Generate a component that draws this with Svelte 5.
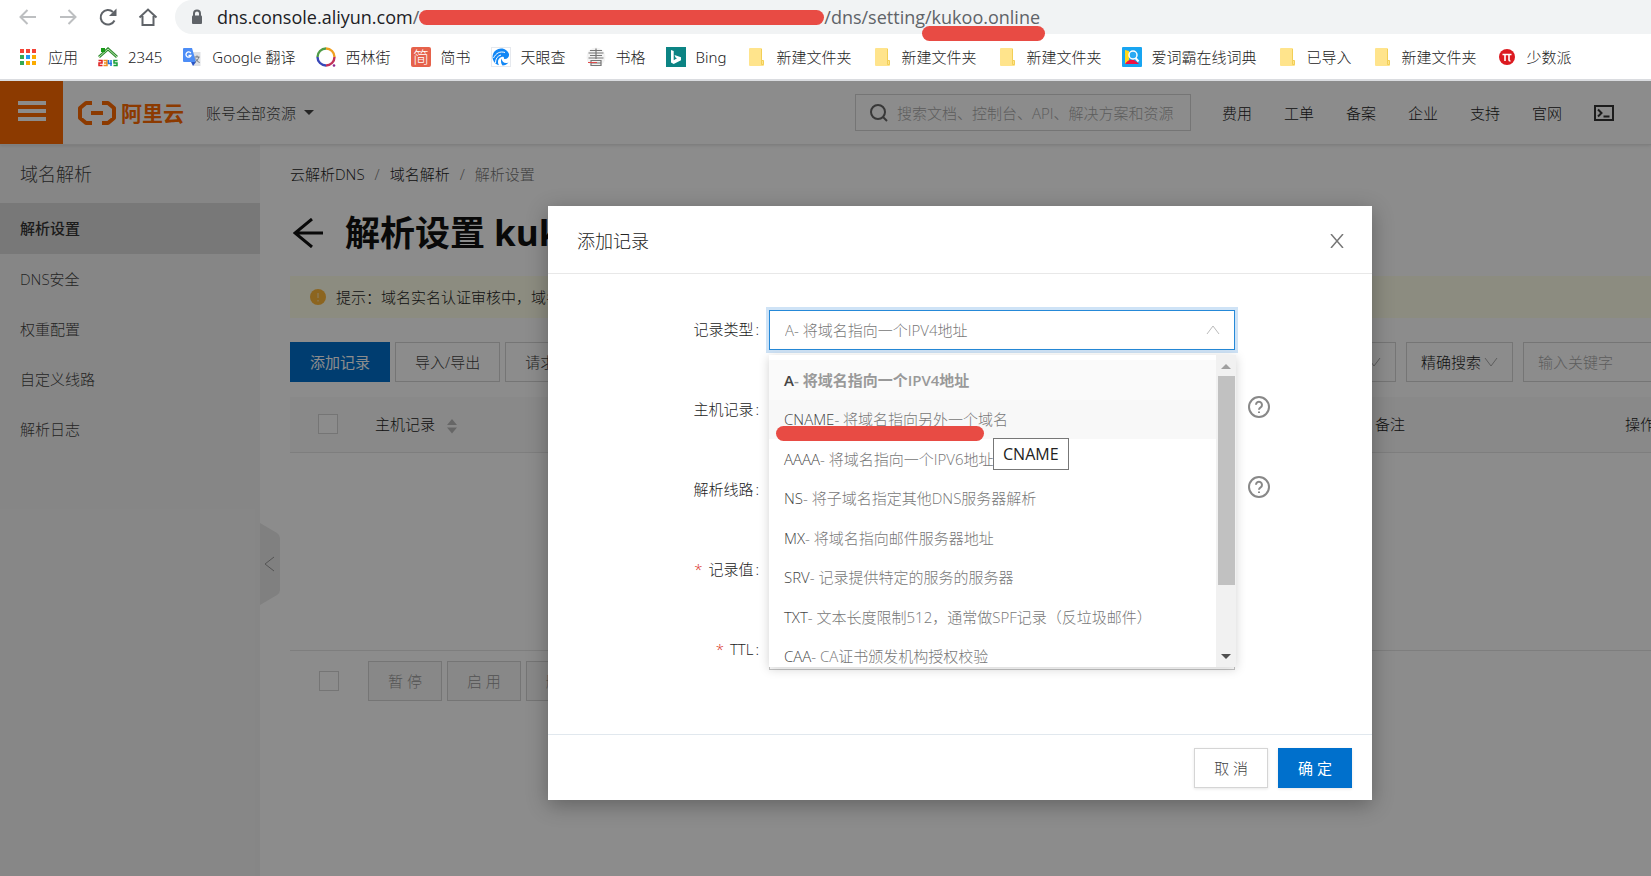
<script>
  const bookmarks = [
    { icon: "apps", label: "应用" },
    { icon: "house", label: "2345" },
    { icon: "translate", label: "Google 翻译" },
    { icon: "ring", label: "西林街" },
    { icon: "jian", label: "简书" },
    { icon: "eye", label: "天眼查" },
    { icon: "shu", label: "书格" },
    { icon: "bing", label: "Bing" },
    { icon: "folder", label: "新建文件夹" },
    { icon: "folder", label: "新建文件夹" },
    { icon: "folder", label: "新建文件夹" },
    { icon: "dict", label: "爱词霸在线词典" },
    { icon: "folder", label: "已导入" },
    { icon: "folder", label: "新建文件夹" },
    { icon: "pi", label: "少数派" },
  ];

  const appDots = ["#f44336", "#f44336", "#f44336", "#34a853", "#2196f3", "#fbab00", "#34a853", "#fbab00", "#fbab00"];

  const navLinks = ["费用", "工单", "备案", "企业", "支持", "官网"];
  const sideLinks = ["解析设置", "DNS安全", "权重配置", "自定义线路", "解析日志"];

  const recordTypes = [
    { code: "A", desc: "将域名指向一个IPV4地址" },
    { code: "CNAME", desc: "将域名指向另外一个域名" },
    { code: "AAAA", desc: "将域名指向一个IPV6地址" },
    { code: "NS", desc: "将子域名指定其他DNS服务器解析" },
    { code: "MX", desc: "将域名指向邮件服务器地址" },
    { code: "SRV", desc: "记录提供特定的服务的服务器" },
    { code: "TXT", desc: "文本长度限制512，通常做SPF记录（反垃圾邮件）" },
    { code: "CAA", desc: "CA证书颁发机构授权校验" },
  ];

  let selected = $state("A");
  let hovered = $state("CNAME");
</script>

{#snippet help()}
  <svg class="help" viewBox="0 0 22 22" aria-hidden="true">
    <circle cx="11" cy="11" r="10" />
    <path d="M8 8.8a3 3 0 1 1 4.6 2.5c-1 .6-1.6 1.1-1.6 2.4M11 15.4v1.5" />
  </svg>
{/snippet}

<div class="browser">
  <div class="toolbar">
    <div class="tools">
      <button class="tool faded" aria-label="Back">
        <svg viewBox="0 0 20 20"><path d="M18 10H3M9.500 3L2.500 10l7 7" /></svg>
      </button>
      <button class="tool faded" aria-label="Forward">
        <svg viewBox="0 0 20 20"><path d="M2 10h15M10.500 3l7 7-7 7" /></svg>
      </button>
      <button class="tool" aria-label="Reload">
        <svg viewBox="0 0 20 20"><path d="M16.500 13.500A7.300 7.300 0 1 1 15 5" /><path class="solid" d="M18.500 1.500v7.500h-7.500z" /></svg>
      </button>
      <button class="tool" aria-label="Home">
        <svg viewBox="0 0 20 20"><path d="M1.500 10.500L10 2.500l8.500 8M4.500 9v9h11V9" /></svg>
      </button>
    </div>
    <div class="address">
      <svg class="lock" viewBox="0 0 12 16"><path d="M3 7V4.500a3 3 0 0 1 6 0V7" /><rect x="1" y="6.500" width="10" height="8.500" rx="1" /></svg>
      <span class="host">dns.console.aliyun.com</span><span>/</span>
      <span class="redacted"><i class="marker"></i></span>
      <span>/dns/setting/</span><span class="domain">kukoo.online<i class="marker under"></i></span>
    </div>
  </div>

  <nav class="bookmarks">
    {#each bookmarks as mark}
      <a href="#mark">
        <svg viewBox="0 0 20 20" aria-hidden="true">
          {#if mark.icon === "apps"}
            {#each appDots as color, i}
              <rect x={2 + (i % 3) * 6} y={2 + Math.floor(i / 3) * 6} width="4" height="4" fill={color} />
            {/each}
          {:else if mark.icon === "house"}
            <path d="M1 10l9-8 9 8" fill="none" stroke="#2e8b2e" stroke-width="3" />
            <path d="M1 10l9-8 9 8" fill="none" stroke="#b9e6b0" stroke-width="1" />
            <path d="M3 1h4v4H3z" fill="#179a17" />
            <g fill="none" stroke-width="1.500">
              <path d="M.5 13.500h3.500v2.500H1v2.500h3.500" stroke="#e02020" />
              <path d="M5.500 13.500H9v5H5.500M6 16h3" stroke="#f08a1c" />
              <path d="M10.500 13v3.500H14M13 13v6" stroke="#2277dd" />
              <path d="M19.500 13.500H16V16h3v2.500h-3.500" stroke="#17a03a" />
            </g>
          {:else if mark.icon === "translate"}
            <path d="M9 5h9.500v14H11z" fill="#dfe1e5" />
            <path d="M2 1h8l4 14H2a1 1 0 0 1-1-1V2a1 1 0 0 1 1-1z" fill="#4d8df6" />
            <path d="M9 15h5l-3 4z" fill="#2a56c6" />
            <path d="M8.800 6.200A2.600 2.600 0 1 0 9 8.500H6.500" fill="none" stroke="#fff" stroke-width="1.300" />
            <path d="M12.500 10h5M15 8.500V10m1.800 0c-.6 2.500-2 4-4 5.500m.8-4c.8 2 2 3 4 4" fill="none" stroke="#707680" />
          {:else if mark.icon === "ring"}
            <g fill="none" stroke-width="2.400">
              <path d="M10 1.500a8.500 8.500 0 0 1 8.500 8.500" stroke="#f0a020" />
              <path d="M18.500 10a8.500 8.500 0 0 1-8.500 8.500" stroke="#c2325a" />
              <path d="M10 18.500A8.500 8.500 0 0 1 1.500 10" stroke="#3848b8" />
              <path d="M1.500 10A8.500 8.500 0 0 1 10 1.500" stroke="#4f9c48" />
            </g>
            <circle cx="18" cy="18.500" r="1.300" fill="#8c2a90" />
          {:else if mark.icon === "jian"}
            <rect width="20" height="20" rx="2" fill="#e6624b" />
            <text x="10" y="16" font-size="16" text-anchor="middle" fill="#fff">简</text>
          {:else if mark.icon === "eye"}
            <rect x=".5" y=".5" width="19" height="19" fill="#fff" stroke="#e6e9ee" />
            <path d="M18 7A8.500 8.500 0 1 0 8 18.200c-2-3-1-7 2.500-8.200 2-.7 3 .5 2.500 2 3 .5 5.500-1.500 5-5z" fill="#1287f5" />
            <path d="M2.500 11C5 6 9 4 14 5.500M4.500 16c0-4.500 2-7 5.500-8" fill="none" stroke="#fff" />
            <path d="M10.500 11.500c.5 3.500 3 5.500 7 4-1.500 2-3.500 3-6 3-1.500-2-2-4.500-1-7z" fill="#1287f5" />
          {:else if mark.icon === "shu"}
            <circle cx="10" cy="10" r="9.500" fill="#f3f3f3" />
            <path d="M4 3.500h12M2.500 6h15M4 8.500h12M2.500 11h15M10 1.500V12M5 13.500h10v5H5zM5 16h10" fill="none" stroke="#777" stroke-width="1.200" />
            <path d="M2 15.500h9" stroke="#e04a4a" />
          {:else if mark.icon === "bing"}
            <rect width="20" height="20" fill="#0c8484" />
            <path d="M5 3l2.700 1v9.300l3.300-2-1.500-.8-1-2.600 6.500 2.400v2.900L7.700 17 5 15.500z" fill="#fff" />
          {:else if mark.icon === "folder"}
            <path d="M4 1h11a1 1 0 0 1 1 1v11l2 1v4a1 1 0 0 1-1 1H4a1 1 0 0 1-1-1V2a1 1 0 0 1 1-1z" fill="#ffe48c" />
            <path d="M15.500 2v11.500M15.500 13.500h2v4h-2z" fill="none" stroke="#f2cf57" />
          {:else if mark.icon === "dict"}
            <rect width="20" height="20" rx="1" fill="#18a5f1" />
            <path d="M3 3l4 1v12l-4 1z" fill="#ffd91a" />
            <path d="M3 17c2-4 6-5 9-4l4 3 1 1z" fill="#ee1144" />
            <circle cx="11" cy="8" r="4" fill="#2aaaf3" stroke="#fff" stroke-width="1.500" />
            <path d="M13.500 11l3 3.500" stroke="#fff" stroke-width="2" />
          {:else}
            <circle cx="10" cy="10" r="8" fill="#dc1a20" />
            <path d="M5.500 7.500h9M8 7.500V14M12 7.500v5.500q0 1 1.500 1" fill="none" stroke="#fff" stroke-width="1.600" />
          {/if}
        </svg>
        {mark.label}
      </a>
    {/each}
  </nav>
</div>

<div class="console">
  <header>
    <button class="menu" aria-label="菜单"><i></i><i></i><i></i></button>
    <a class="logo" href="#home">
      <svg viewBox="0 0 38 24" aria-hidden="true">
        <path d="M14 2H8L2 7v10l6 5h6M24 2h6l6 5v10l-6 5h-6" />
        <path d="M13 12h12" />
      </svg>
      阿里云
    </a>
    <button class="account">账号全部资源 <i class="caret"></i></button>
    <label class="site-search">
      <svg viewBox="0 0 18 18" aria-hidden="true"><circle cx="8" cy="8" r="7" /><path d="M13 13l4 4" /></svg>
      <input type="text" placeholder="搜索文档、控制台、API、解决方案和资源" aria-label="搜索" />
    </label>
    <nav class="links">
      {#each navLinks as link}
        <a href="#nav">{link}</a>
      {/each}
      <svg viewBox="0 0 20 16" aria-hidden="true"><rect x="1" y="1" width="18" height="14" /><path d="M4 4.500L7.500 8 4 11.500M9.500 11.500h6" /></svg>
    </nav>
  </header>

  <div class="layout">
    <aside>
      <h2>域名解析</h2>
      {#each sideLinks as link, i}
        <a href="#side" class:active={i === 0}>{link}</a>
      {/each}
      <button class="collapse" aria-label="收起">
        <svg viewBox="0 0 20 82"><path class="tab" d="M0 0l17 10q3 2 3 5v52q0 3-3 5L0 82z" /><path class="arrow" d="M14 34l-9 7 9 7" /></svg>
      </button>
    </aside>

    <main>
      <div class="crumbs">
        <a href="#dns">云解析DNS</a><span>/</span><a href="#domains">域名解析</a><span>/</span><span class="current">解析设置</span>
      </div>
      <div class="heading">
        <svg viewBox="0 0 30 30" aria-hidden="true"><path d="M30 15H2M19 1L2 15l17 14" /></svg>
        <h1>解析设置 kukoo.online</h1>
      </div>
      <div class="notice">
        <svg viewBox="0 0 16 16" aria-hidden="true"><circle cx="8" cy="8" r="8" /><path d="M8 4v5M8 11v1.500" /></svg>
        提示：域名实名认证审核中，域名
      </div>

      <div class="actions">
        <button class="btn primary">添加记录</button>
        <button class="btn">导入/导出</button>
        <button class="btn">请求量统计</button>
        <div class="filters">
          <div class="picker">
            <select aria-label="线路"></select>
            <svg viewBox="0 0 14 10" aria-hidden="true"><path d="M1 1l6 8 6-8" /></svg>
          </div>
          <div class="picker">
            <select aria-label="搜索方式"><option>精确搜索</option></select>
            <svg viewBox="0 0 14 10" aria-hidden="true"><path d="M1 1l6 8 6-8" /></svg>
          </div>
          <input class="keyword" type="text" placeholder="输入关键字" aria-label="关键字" />
        </div>
      </div>

      <table>
        <thead>
          <tr>
            <th class="check"><input type="checkbox" aria-label="全选" /></th>
            <th>
              主机记录
              <svg class="sort" viewBox="0 0 10 16" aria-hidden="true"><path d="M0 7l5-6 5 6zM0 9.500l5 6 5-6z" /></svg>
            </th>
            <th class="note">备注</th>
            <th class="ops">操作</th>
          </tr>
        </thead>
        <tbody>
          <tr><td colspan="4"></td></tr>
        </tbody>
      </table>
      <div class="batch">
        <input type="checkbox" aria-label="选择本页" />
        <button class="btn" disabled>暂 停</button>
        <button class="btn" disabled>启 用</button>
        <button class="btn" disabled>删 除</button>
      </div>
    </main>
  </div>

  <div class="mask">
    <div class="modal" role="dialog" aria-labelledby="modal-title">
      <div class="modal-head">
        <h3 id="modal-title">添加记录</h3>
        <button class="close" aria-label="关闭">
          <svg viewBox="0 0 14 14"><path d="M1 0l12 14M13 0L1 14" /></svg>
        </button>
      </div>

      <form class="modal-body">
        <div class="row">
          <label for="type">记录类型</label>
          <div class="field">
            <select id="type" class="control focused" bind:value={selected}>
              {#each recordTypes as type}
                <option value={type.code}>{type.code}- {type.desc}</option>
              {/each}
            </select>
            <svg class="chevron" viewBox="0 0 14 10" aria-hidden="true"><path d="M1 9l6-8 6 8" /></svg>

            <div class="dropdown">
              <ul role="listbox" aria-label="记录类型">
                {#each recordTypes as type}
                  <li
                    role="option"
                    aria-selected={type.code === selected}
                    class:selected={type.code === selected}
                    class:hovered={type.code === hovered}
                    onmouseenter={() => (hovered = type.code)}
                  >
                    {type.code}<span>- {type.desc}</span>
                  </li>
                {/each}
              </ul>
              <div class="scrollbar">
                <i class="up"></i>
                <i class="thumb"></i>
                <i class="down"></i>
              </div>
              <i class="marker option-mark"></i>
              <span class="tip">CNAME</span>
            </div>
          </div>
        </div>
        <div class="row">
          <label for="host">主机记录</label>
          <div class="field"><input id="host" class="control" type="text" /></div>
          {@render help()}
        </div>
        <div class="row">
          <label for="line">解析线路</label>
          <div class="field"><input id="line" class="control" type="text" /></div>
          {@render help()}
        </div>
        <div class="row">
          <label for="value" class="required">记录值</label>
          <div class="field"><input id="value" class="control" type="text" /></div>
        </div>
        <div class="row">
          <label for="ttl" class="required">TTL</label>
          <div class="field"><input id="ttl" class="control" type="text" /></div>
        </div>
      </form>

      <div class="modal-foot">
        <button class="btn">取 消</button>
        <button class="btn primary">确 定</button>
      </div>
    </div>
  </div>
</div>

<style>
  :global(body) {
    margin: 0;
    overflow: hidden;
    font-family: "Open Sans", "Noto Sans CJK SC", sans-serif;
    font-size: 15px;
    font-weight: 300;
    line-height: 20px;
    color: #222;
    background: #fff;
  }

  :global(#app) {
    display: flex;
    flex-direction: column;
    min-height: 100vh;
  }

  * {
    box-sizing: border-box;
  }

  button,
  input,
  select {
    font: inherit;
    color: inherit;
    margin: 0;
    border-radius: 0;
  }

  button {
    padding: 0;
    border: none;
    background: none;
    cursor: pointer;
  }

  a {
    color: inherit;
    text-decoration: none;
  }

  svg {
    flex: none;
    display: block;
  }

  /* browser chrome */
  .browser {
    border-bottom: 2px solid #dadce0;
    font-weight: 400;
  }

  .toolbar {
    display: flex;
    align-items: center;
    gap: 17px;
    height: 34px;
    padding-left: 18px;
  }

  .tools {
    display: flex;
    gap: 20px;
  }

  .tool {
    width: 20px;
    height: 20px;
  }

  .tool path {
    fill: none;
    stroke: #5f6368;
    stroke-width: 2;
  }

  .tool .solid {
    fill: #5f6368;
    stroke: none;
  }

  .faded path {
    stroke: #bdbfc1;
  }

  .address {
    flex: 1;
    display: flex;
    align-items: center;
    height: 34px;
    padding-left: 16px;
    border-radius: 17px 0 0 17px;
    background: #f1f3f4;
    font-size: 18px;
    color: #5f6368;
  }

  .lock {
    width: 12px;
    height: 16px;
    margin-right: 14px;
    fill: #5f6368;
  }

  .lock path {
    fill: none;
    stroke: #5f6368;
    stroke-width: 2;
  }

  .host {
    color: #202124;
  }

  .redacted {
    position: relative;
    width: 405px;
    height: 20px;
  }

  .domain {
    position: relative;
  }

  .marker {
    position: absolute;
    z-index: 2;
    left: 0;
    right: 0;
    top: 3px;
    height: 15px;
    border-radius: 8px;
    background: #e84b44;
  }

  .under {
    top: 19px;
    left: -10px;
    right: -5px;
  }

  .bookmarks {
    display: flex;
    align-items: center;
    gap: 20px;
    height: 45px;
    padding: 1px 18px 0;
    font-family: "Noto Sans", "Noto Sans CJK SC", sans-serif;
    font-weight: 300;
    color: #222;
    white-space: nowrap;
  }

  .bookmarks a {
    display: flex;
    align-items: center;
    gap: 10px;
  }

  .bookmarks svg {
    width: 20px;
    height: 20px;
  }

  /* console header */
  .console {
    position: relative;
    flex: 1;
    display: flex;
    flex-direction: column;
    overflow: hidden;
  }

  header {
    display: flex;
    align-items: center;
    height: 64px;
    border-bottom: 1px solid #e8e8e8;
    box-shadow: 0 1px 3px rgba(0, 0, 0, 0.1);
    z-index: 1;
  }

  .menu {
    display: flex;
    flex-direction: column;
    justify-content: center;
    align-items: center;
    gap: 4px;
    width: 63px;
    height: 63px;
    padding-bottom: 3px;
    background: #ff6a00;
  }

  .menu i {
    width: 28px;
    height: 4px;
    background: #fff;
  }

  .logo {
    display: flex;
    align-items: center;
    gap: 5px;
    margin-left: 15px;
    font-size: 21px;
    font-weight: 700;
    color: #ff6a00;
  }

  .logo svg {
    width: 38px;
    height: 24px;
    fill: none;
    stroke: #ff6a00;
    stroke-width: 4;
    stroke-linejoin: round;
  }

  .account {
    display: flex;
    align-items: center;
    gap: 8px;
    margin-left: 22px;
    color: #444;
  }

  .caret {
    border: 5px solid transparent;
    border-top-color: #444;
    border-bottom: none;
  }

  .site-search {
    display: flex;
    align-items: center;
    gap: 9px;
    width: 336px;
    height: 37px;
    margin-left: auto;
    padding: 0 0 0 14px;
    border: 1px solid #d5d5d5;
  }

  .site-search svg {
    width: 18px;
    height: 18px;
    fill: none;
    stroke: #666;
    stroke-width: 2;
  }

  .site-search input {
    flex: 1;
    min-width: 0;
    padding: 0;
    border: none;
    outline: none;
    background: none;
  }

  ::placeholder {
    color: #aaa;
    opacity: 1;
  }

  .links {
    display: flex;
    align-items: center;
    gap: 32px;
    margin: 0 37px 0 31px;
  }

  .links svg {
    width: 20px;
    height: 16px;
    fill: none;
    stroke: #333;
    stroke-width: 2;
  }

  /* sidebar and page */
  .layout {
    flex: 1;
    display: flex;
  }

  aside {
    position: relative;
    flex: none;
    width: 260px;
    background: #f5f5f5;
    color: #444;
  }

  aside h2 {
    margin: 0;
    padding: 0 20px;
    font-size: 18px;
    font-weight: 300;
    line-height: 58px;
  }

  aside a {
    display: block;
    padding: 0 20px;
    line-height: 50px;
  }

  aside .active {
    background: #dadada;
    color: #333;
    font-weight: 500;
    line-height: 51px;
  }

  .collapse {
    position: absolute;
    left: 100%;
    top: 378px;
    width: 20px;
    height: 82px;
  }

  .tab {
    fill: #e9e9e9;
  }

  .arrow {
    fill: none;
    stroke: #999;
  }

  main {
    flex: 1;
    min-width: 0;
    padding: 19px 0 0 30px;
  }

  .crumbs {
    display: flex;
    gap: 10px;
    color: #222;
  }

  .crumbs span {
    color: #777;
  }

  .heading {
    display: flex;
    align-items: center;
    gap: 22px;
    height: 50px;
    margin-top: 24px;
    padding-left: 3px;
  }

  .heading svg {
    width: 30px;
    height: 30px;
    fill: none;
    stroke: #111;
    stroke-width: 3;
  }

  h1 {
    margin: 0;
    font-size: 35px;
    font-weight: 700;
    line-height: 50px;
    color: #111;
    white-space: nowrap;
  }

  .notice {
    display: flex;
    align-items: center;
    gap: 10px;
    height: 42px;
    margin-top: 18px;
    padding-left: 20px;
    background: #ffffe9;
  }

  .notice svg {
    width: 16px;
    height: 16px;
    fill: #ffb83a;
    stroke: #ffe9bd;
    stroke-width: 1;
  }

  .notice circle {
    stroke: none;
  }

  .actions {
    display: flex;
    gap: 5px;
    margin-top: 24px;
  }

  .btn {
    height: 40px;
    padding: 0 19px;
    border: 1px solid #d5d5d5;
    background: #fff;
    color: #444;
    white-space: nowrap;
  }

  .primary {
    border-color: #0070cc;
    background: #0070cc;
    color: #fff;
    font-weight: 400;
  }

  .filters {
    display: flex;
    gap: 10px;
    margin-left: auto;
  }

  .picker {
    display: flex;
    align-items: center;
    width: 107px;
    height: 40px;
    padding: 0 14px;
    border: 1px solid #d5d5d5;
  }

  .picker select {
    flex: 1;
    min-width: 0;
    padding: 0;
    border: none;
    appearance: none;
    background: none;
  }

  .picker svg {
    width: 14px;
    height: 10px;
    fill: none;
    stroke: #aaa;
  }

  .keyword {
    width: 128px;
    height: 40px;
    padding: 0 0 0 14px;
    border: 1px solid #d5d5d5;
    border-right: none;
    background: none;
  }

  table {
    width: 100%;
    margin-top: 15px;
    border-collapse: collapse;
    table-layout: fixed;
  }

  th {
    height: 55px;
    padding: 0;
    border-bottom: 1px solid #e5e5e5;
    background: #fafafa;
    font-weight: 300;
    text-align: left;
    white-space: nowrap;
    overflow: hidden;
  }

  td {
    height: 198px;
    padding: 0;
    border-bottom: 1px solid #e5e5e5;
  }

  .check {
    width: 85px;
    padding-left: 28px;
  }

  .note {
    width: 250px;
  }

  .ops {
    width: 26px;
  }

  .sort {
    display: inline-block;
    width: 10px;
    height: 16px;
    margin-left: 8px;
    vertical-align: middle;
    fill: #bbb;
  }

  input[type="checkbox"] {
    display: block;
    width: 20px;
    height: 20px;
    border: 1px solid #d5d5d5;
    appearance: none;
    background: #fff;
  }

  .batch {
    display: flex;
    align-items: center;
    gap: 5px;
    padding: 10px 0 0 29px;
  }

  .batch input {
    margin-right: 24px;
  }

  .batch .btn {
    background: #f7f7f7;
    color: #999;
  }

  /* dialog */
  .mask {
    position: absolute;
    z-index: 2;
    inset: 0;
    padding: 125px 0 0 269px;
    background: rgba(0, 0, 0, 0.45);
  }

  .modal {
    width: 824px;
    margin: 0 auto;
    background: #fff;
    box-shadow: 0 5px 20px rgba(0, 0, 0, 0.3);
  }

  .modal-head {
    display: flex;
    align-items: center;
    justify-content: space-between;
    height: 68px;
    padding: 2px 28px 0 29px;
    border-bottom: 1px solid #e8e8e8;
  }

  h3 {
    margin: 0;
    font-size: 18px;
    font-weight: 300;
  }

  .close {
    width: 14px;
    height: 14px;
  }

  .close path {
    fill: none;
    stroke: #777;
    stroke-width: 1.5;
  }

  .modal-body {
    display: grid;
    gap: 40px;
    padding: 36px 102px 64px 30px;
  }

  .row {
    display: flex;
    height: 40px;
  }

  .row label {
    width: 181px;
    margin-right: 10px;
    line-height: 38px;
    text-align: right;
  }

  .row label::after {
    content: ":";
    margin-left: 2px;
  }

  .required::before {
    content: "*";
    margin-right: 6px;
    color: #d93026;
  }

  .field {
    position: relative;
    width: 466px;
  }

  .control {
    display: block;
    width: 100%;
    height: 40px;
    padding: 0 15px;
    border: 1px solid #c5c5c5;
    appearance: none;
    background: #fff;
    color: #777;
    outline: none;
  }

  .focused {
    border-color: #2589d8;
    box-shadow: 0 0 0 3px #cfe3f6;
  }

  .chevron {
    position: absolute;
    right: 15px;
    top: 15px;
    width: 14px;
    height: 10px;
    fill: none;
    stroke: #bbb;
  }

  .help {
    width: 22px;
    height: 22px;
    margin: 6px 0 0 13px;
    fill: none;
    stroke: #888;
    stroke-width: 2;
  }

  .dropdown {
    position: absolute;
    z-index: 1;
    left: 0;
    right: -1px;
    top: 45px;
    display: flex;
    height: 312px;
    background: #fff;
    box-shadow: 0 2px 10px rgba(0, 0, 0, 0.18);
  }

  .dropdown ul {
    flex: 1;
    display: flex;
    flex-direction: column;
    height: 321px;
    margin: 0;
    padding: 5px 0 0;
    list-style: none;
  }

  .dropdown li {
    flex: 1;
    display: flex;
    align-items: center;
    padding-left: 15px;
    color: #444;
    white-space: nowrap;
  }

  .dropdown li span {
    color: #777;
  }

  .dropdown .selected {
    background: #fafafa;
    font-weight: 600;
  }

  .dropdown .selected span {
    color: #999;
  }

  .dropdown .hovered {
    background: #f8f8f8;
  }

  .scrollbar {
    display: flex;
    flex-direction: column;
    align-items: center;
    width: 20px;
    background: #f1f1f1;
  }

  .thumb {
    width: 17px;
    height: 209px;
    background: #c1c1c1;
  }

  .up,
  .down {
    border: 5px solid transparent;
  }

  .up {
    margin: 9px 0 7px;
    border-top: none;
    border-bottom-color: #a0a0a0;
  }

  .down {
    margin: auto 0 8px;
    border-bottom: none;
    border-top-color: #505050;
  }

  .option-mark {
    left: 7px;
    right: auto;
    top: 71px;
    width: 208px;
  }

  .tip {
    position: absolute;
    z-index: 3;
    left: 224px;
    top: 83px;
    padding: 5px 9px;
    border: 1px solid #777;
    background: #fff;
    font-size: 16px;
    font-weight: 400;
  }

  .modal-foot {
    display: flex;
    justify-content: flex-end;
    gap: 10px;
    padding: 13px 20px 12px;
    border-top: 1px solid #e1e8ee;
  }

  .modal-foot .btn {
    box-shadow: 0 1px 3px rgba(0, 0, 0, 0.1);
  }
</style>
